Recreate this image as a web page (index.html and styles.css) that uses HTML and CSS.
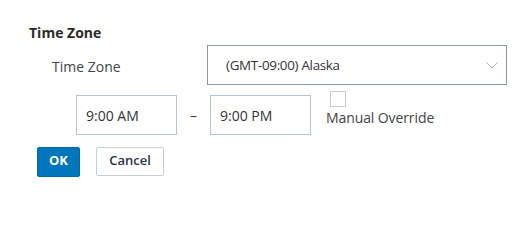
FILE: index.html
```html
<!DOCTYPE html>
<html>
<head>
<meta charset="utf-8">
<link rel="stylesheet" href="styles.css">
</head>
<body>
<div class="page">
  <div class="title">Time Zone</div>
  <div class="tz-row">
    <div class="label">Time Zone</div>
    <div class="select">
      <span class="select-text">(GMT-09:00) Alaska</span>
      <svg class="chev" width="12" height="7" viewBox="0 0 12 7"><path d="M0.5 0.5 L6 6 L11.5 0.5" fill="none" stroke="#a9b1ba" stroke-width="1"/></svg>
    </div>
  </div>
  <div class="time-row">
    <div class="time-input">9:00 AM</div>
    <div class="dash">–</div>
    <div class="time-input">9:00 PM</div>
    <div class="override">
      <span class="checkbox"></span>
      <span class="override-label">Manual Override</span>
    </div>
  </div>
  <div class="buttons">
    <button class="btn btn-ok">OK</button>
    <button class="btn btn-cancel">Cancel</button>
  </div>
</div>
</body>
</html>
```
FILE: styles.css
```css
* { box-sizing: border-box; }
body {
  margin: 0;
  background: #fff;
  font-family: "Open Sans", "Liberation Sans", sans-serif;
  color: #333;
}
.page {
  padding: 23px 0 0 29px;
}
.title {
  font-size: 14px;
  font-weight: 700;
  line-height: 20px;
  color: #2b2b2b;
}
.tz-row {
  display: flex;
  align-items: center;
  margin-top: 2px;
}
.label {
  width: 178px;
  padding-left: 23px;
  padding-top: 3px;
  font-size: 14px;
  color: #444;
}
.select {
  width: 300px;
  height: 40px;
  border: 1px solid #8c9cae;
  display: flex;
  align-items: center;
  justify-content: space-between;
  padding: 0 8px 0 18px;
  font-size: 13.4px;
  letter-spacing: -0.3px;
  color: #333;
}
.chev { margin-top: 0; }
.time-row {
  display: flex;
  align-items: flex-start;
  margin-top: 10px;
  margin-left: 47px;
}
.time-input {
  width: 101px;
  height: 40px;
  border: 1px solid #b8c6d2;
  display: flex;
  align-items: center;
  padding-left: 9px;
  font-size: 14px;
  color: #333;
}
.dash {
  width: 33px;
  height: 40px;
  display: flex;
  align-items: center;
  justify-content: center;
  font-size: 14px;
  color: #444;
}
.override {
  display: flex;
  flex-direction: column;
  align-items: flex-start;
  margin-left: 15px;
  margin-top: -4px;
}
.checkbox {
  width: 16px;
  height: 16px;
  border: 1px solid #c5cdd5;
  margin-left: 4px;
  background: #fff;
}
.override-label {
  font-size: 14px;
  color: #444;
  line-height: 20px;
  margin-top: 1px;
  letter-spacing: -0.1px;
}
.buttons {
  display: flex;
  gap: 16px;
  margin-top: 12px;
  margin-left: 8px;
  align-items: flex-start;
}
.btn {
  font-family: "Open Sans", "Liberation Sans", sans-serif;
  font-size: 13px;
  padding: 0 0 4px 0;
  border-radius: 2px;
  cursor: pointer;
}
.btn-ok {
  width: 43px;
  height: 30px;
  background: #0077bc;
  border: 1px solid #0068a6;
  color: #fff;
  font-weight: 700;
}
.btn-cancel {
  width: 68px;
  height: 29px;
  background: #fff;
  border: 1px solid #c6ced6;
  color: #2b3440;
  font-weight: 600;
}
```
